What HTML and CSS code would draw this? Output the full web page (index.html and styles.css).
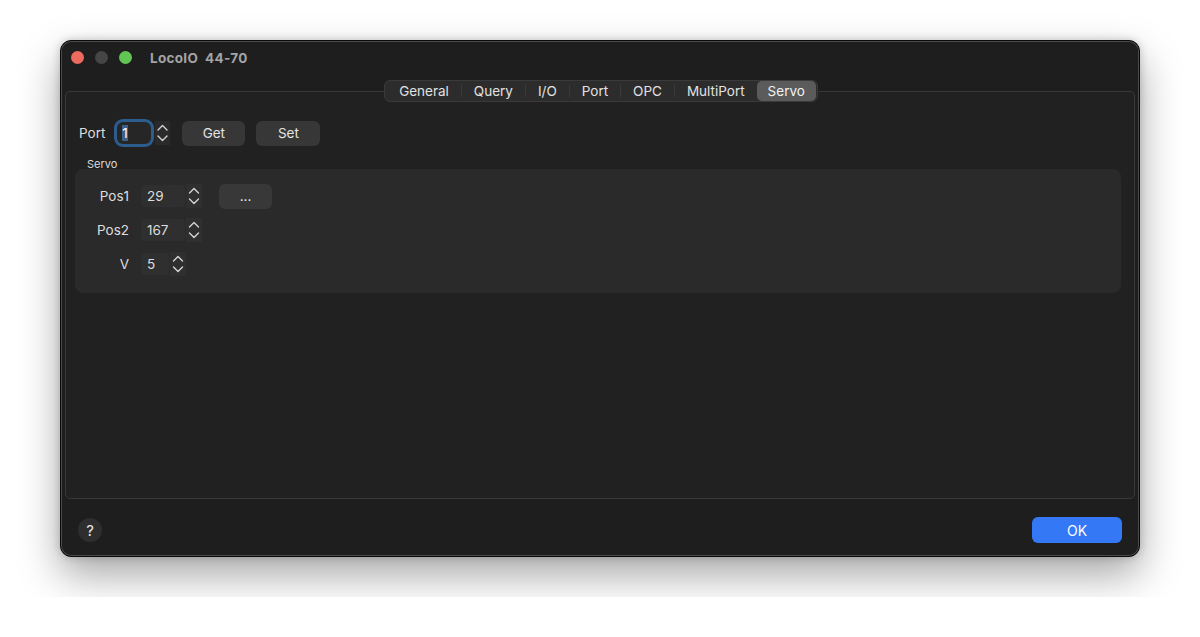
FILE: index.html
```html
<!DOCTYPE html>
<html lang="en">
<head>
  <meta charset="UTF-8">
  <title>LocoIO 44-70</title>
  <link rel="stylesheet" href="styles.css">
</head>
<body>

  <div class="window">
    <div class="titlebar">
      <span class="light red"></span>
      <span class="light grey"></span>
      <span class="light green"></span>
      <span class="title">LocoIO&nbsp; 44-70</span>
    </div>

    <div class="tabs">
      <div class="tab-bar">
        <span class="tab">General</span>
        <span class="tab">Query</span>
        <span class="tab">I/O</span>
        <span class="tab">Port</span>
        <span class="tab">OPC</span>
        <span class="tab">MultiPort</span>
        <span class="tab selected">Servo</span>
      </div>

      <div class="pane">
        <div class="port-row">
          <span class="label">Port</span>
          <div class="spin">
            <span class="field focused"><span class="sel">1</span></span>
            <svg class="stepper" width="15" height="24" viewBox="0 0 15 24">
              <path d="M3 9 L7.5 4.5 L12 9" />
              <path d="M3 15 L7.5 19.5 L12 15" />
            </svg>
          </div>
          <button class="btn get">Get</button>
          <button class="btn set">Set</button>
        </div>

        <div class="group-title">Servo</div>
        <div class="group">
          <div class="row">
            <span class="row-label">Pos1</span>
            <div class="spin">
              <span class="field wide">29</span>
              <svg class="stepper" width="16" height="24" viewBox="0 0 16 24">
                <path d="M3.5 9 L8 4.5 L12.5 9" />
                <path d="M3.5 15 L8 19.5 L12.5 15" />
              </svg>
            </div>
            <button class="btn dots">...</button>
          </div>
          <div class="row">
            <span class="row-label">Pos2</span>
            <div class="spin">
              <span class="field wide">167</span>
              <svg class="stepper" width="16" height="24" viewBox="0 0 16 24">
                <path d="M3.5 9 L8 4.5 L12.5 9" />
                <path d="M3.5 15 L8 19.5 L12.5 15" />
              </svg>
            </div>
          </div>
          <div class="row">
            <span class="row-label">V</span>
            <div class="spin">
              <span class="field narrow">5</span>
              <svg class="stepper" width="16" height="24" viewBox="0 0 16 24">
                <path d="M3.5 9 L8 4.5 L12.5 9" />
                <path d="M3.5 15 L8 19.5 L12.5 15" />
              </svg>
            </div>
          </div>
        </div>
      </div>
    </div>

    <div class="footer">
      <span class="help">?</span>
      <button class="ok">OK</button>
    </div>
  </div>

</body>
</html>
```

FILE: styles.css
```css
body {
  margin: 0;
  background: #fff;
  padding: 40px 60px;
  font-family: Inter, "Noto Sans", sans-serif;
  font-size: 13.5px;
  color: #dedede;
}

.window {
  width: 1080px;
  height: 517px;
  box-sizing: border-box;
  background: #1e1e1e;
  border: 1px solid #0a0a0a;
  border-radius: 11px;
  box-shadow: inset 0 0 0 1px #4a4a4a, 0 18px 40px rgba(0, 0, 0, 0.35), 0 0 8px rgba(0, 0, 0, 0.2);
  display: flex;
  flex-direction: column;
}

.titlebar {
  height: 33px;
  display: flex;
  align-items: center;
  padding-left: 10px;
  flex-shrink: 0;
}

.light {
  width: 13px;
  height: 13px;
  border-radius: 50%;
  margin-right: 11px;
}

.red { background: #ed6a5e; }
.grey { background: #464646; }
.green { background: #61c554; }

.title {
  margin-left: 7px;
  font-weight: 700;
  font-size: 13.5px;
  color: #a4a4a4;
  letter-spacing: 0.3px;
}

.tabs {
  margin: 6px 4px 0;
  display: flex;
  flex-direction: column;
}

.tab-bar {
  align-self: center;
  display: flex;
  align-items: center;
  height: 22px;
  padding: 0 1px;
  margin-left: 2px;
  background: #2c2c2c;
  border: 1px solid #3a3a3a;
  border-radius: 6px;
  position: relative;
  z-index: 1;
  box-sizing: border-box;
}

.tab {
  padding: 0 12px;
  line-height: 20px;
  color: #e2e2e2;
  border-left: 1px solid #3a3a3a;
  height: 12px;
  display: flex;
  align-items: center;
}

.tab:first-child {
  border-left: none;
  padding-left: 13px;
}

.tab.selected {
  background: #5b5b5b;
  border-radius: 5px;
  border-left: none;
  height: 20px;
  padding: 0 11px;
  color: #f2f2f2;
}

.pane {
  margin-top: -11px;
  height: 408px;
  box-sizing: border-box;
  background: #212121;
  border: 1px solid #383838;
  border-radius: 5px;
  padding: 27px 13px 0 9px;
}

.port-row {
  display: flex;
  align-items: center;
  height: 28px;
  padding-left: 4px;
}

.label {
  margin-right: 12px;
}

.spin {
  display: flex;
  align-items: center;
}

.field {
  height: 22px;
  line-height: 22px;
  box-sizing: border-box;
  background: #2f2f2f;
  border-radius: 4px;
  padding-left: 6px;
}

.field.focused {
  width: 34px;
  background: #262626;
  border-radius: 6px;
  box-shadow: 0 0 0 3px #2d5d8e;
  padding-left: 5px;
}

.sel {
  background: #3e5f87;
  color: #fff;
}

.field.wide { width: 44px; }
.field.narrow { width: 28px; }

.stepper {
  margin-left: 4px;
  background: #2a2a2a;
}

.stepper path {
  fill: none;
  stroke: #d4d4d4;
  stroke-width: 1.4;
  stroke-linecap: round;
  stroke-linejoin: round;
}

.btn {
  font-family: inherit;
  font-size: 13.5px;
  color: #e4e4e4;
  background: #373737;
  border: none;
  border-radius: 6px;
  height: 25px;
  padding: 0;
}

.get {
  width: 63px;
  margin-left: 12px;
}

.set {
  width: 64px;
  margin-left: 11px;
}

.group-title {
  font-size: 11px;
  margin: 10px 0 0 12px;
  color: #dcdcdc;
}

.group {
  margin-top: -2px;
  height: 124px;
  box-sizing: border-box;
  background: #2a2a2a;
  border-radius: 8px;
  padding: 10px 0 0;
}

.row {
  display: flex;
  align-items: center;
  height: 34px;
}

.row-label {
  width: 54px;
  text-align: right;
  margin-right: 12px;
}

.group .stepper {
  margin-left: 1px;
  background: #2f2f2f;
}

.dots {
  width: 53px;
  margin-left: 17px;
  background: #383838;
}

.footer {
  flex: 1;
  display: flex;
  align-items: center;
  justify-content: space-between;
  padding: 5px 17px 0 17px;
}

.help {
  width: 24px;
  height: 24px;
  border-radius: 50%;
  background: #2e2e2e;
  color: #e8e8e8;
  font-size: 15px;
  display: flex;
  align-items: center;
  justify-content: center;
}

.ok {
  width: 90px;
  height: 26px;
  background: #3478f6;
  color: #fff;
  border: none;
  border-radius: 6px;
  font-family: inherit;
  font-size: 14px;
}
```
